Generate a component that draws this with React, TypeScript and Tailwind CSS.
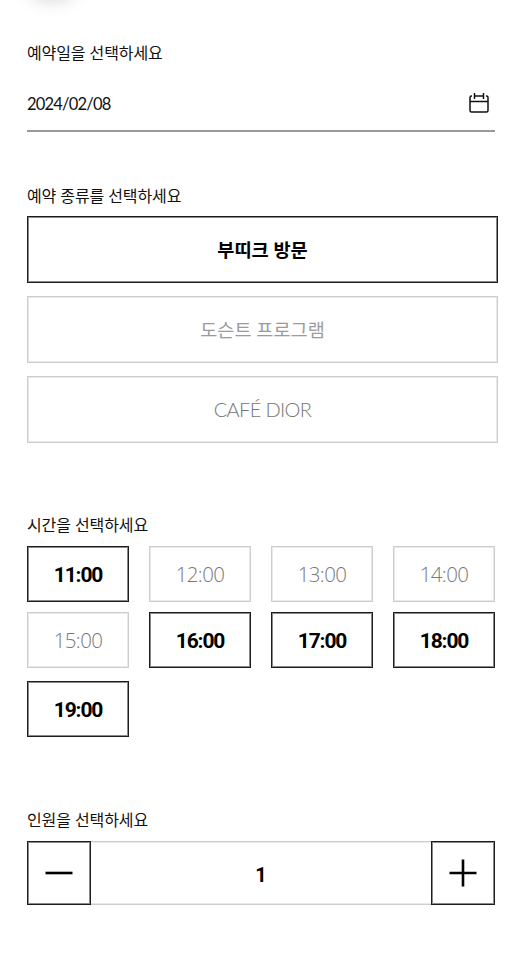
import clsx from "clsx";

interface Option {
  label: string;
  active: boolean;
}

const types: Option[] = [
  { label: "부띠크 방문", active: true },
  { label: "도슨트 프로그램", active: false },
];

const times: Option[] = [
  { label: "11:00", active: true },
  { label: "12:00", active: false },
  { label: "13:00", active: false },
  { label: "14:00", active: false },
  { label: "15:00", active: false },
  { label: "16:00", active: true },
  { label: "17:00", active: true },
  { label: "18:00", active: true },
  { label: "19:00", active: true },
];

const Label = ({ children }: { children: string }) => (
  <h2 className="h-6 text-[16px] leading-6 tracking-[-0.1px] text-[#111]">{children}</h2>
);

const frame = (active: boolean) =>
  active
    ? "border border-[#1c1c1c] shadow-[inset_0_0_0_1px_#8a8a8a]"
    : "border border-[#cdcdcd] shadow-[inset_0_0_0_1px_#e9e9e9]";

export default function App() {
  return (
    <div className="relative h-[960px] w-[522px] overflow-hidden bg-white pl-[27px] pt-[41px] font-['Open_Sans','Noto_Sans_CJK_KR',sans-serif]">
      {/* Shadow of the floating button above */}
      <div className="absolute left-[27px] -top-[54px] size-[50px] rounded-full shadow-[0_3px_20px_rgba(0,0,0,0.22)]" />

      {/* Date */}
      <section className="w-[468px]">
        <Label>예약일을 선택하세요</Label>
        <div className="mt-5 flex h-[47px] items-start justify-between border-b-2 border-[#999] pr-1.5">
          <span className="mt-[7px] font-['Lato'] text-[16.5px] leading-6 tracking-[-0.8px] text-[#111]">2024/02/08</span>
          <svg viewBox="0 0 20 20" className="mt-[8px] size-5" fill="none" stroke="#111" strokeWidth="1.5">
            <path d="M3 3H2.5Q1 3 1 4.5V17.5Q1 19 2.5 19H17.5Q19 19 19 17.5V4.500Q19 3 17.500 3H17M5.500 0V6M14.500 0V6M5.500 3H14.500M1 8.500H19" />
          </svg>
        </div>
      </section>

      {/* Reservation type */}
      <section className="mt-[52px] w-[471px]">
        <Label>예약 종류를 선택하세요</Label>
        <div className="mt-2 flex flex-col gap-[13px] text-[18.6px]">
          {types.map((t) => (
            <button
              key={t.label}
              className={clsx("h-[67px]", frame(t.active), t.active ? "font-bold text-black" : "text-[#9b9b9b]")}
            >
              {t.label}
            </button>
          ))}
          <button
            className={clsx("h-[67px] pb-0.5 font-['Lato'] text-[20px] font-light tracking-[-0.65px] text-[#757575]", frame(false))}
          >
            CAFÉ DIOR
          </button>
        </div>
      </section>

      {/* Time */}
      <section className="mt-[70px] w-[468px]">
        <Label>시간을 선택하세요</Label>
        <div className="mt-[9px] grid grid-cols-4 gap-x-5 text-[20.5px]">
          {times.map((t, i) => (
            <button
              key={t.label}
              className={clsx(
                "h-14",
                i < 4 ? "mb-2.5" : i < 8 && "mb-[13px]",
                frame(t.active),
                t.active
                  ? "pt-[3px] font-['Roboto'] text-[21px] font-bold tracking-[-1.1px] text-black"
                  : "pt-px font-light tracking-[-0.6px] text-[#787878]"
              )}
            >
              {t.label}
            </button>
          ))}
        </div>
      </section>

      {/* Guests */}
      <section className="mt-[71px] w-[468px]">
        <Label>인원을 선택하세요</Label>
        <div className="mt-[9px] flex h-16">
          <button className={clsx("flex w-16 items-center justify-center", frame(true))}>
            <svg viewBox="0 0 28 28" className="size-7" stroke="#000" strokeWidth="2.6">
              <path d="M0.500 14H27.500" />
            </svg>
          </button>
          <div className="flex flex-1 items-center justify-center border-y border-[#cdcdcd] pt-1 font-['Roboto'] text-[20px] font-bold text-black shadow-[inset_0_-1px_0_#e9e9e9,inset_0_1px_0_#e9e9e9]">
            1
          </div>
          <button className={clsx("flex w-16 items-center justify-center", frame(true))}>
            <svg viewBox="0 0 28 28" className="size-7" stroke="#000" strokeWidth="2.6">
              <path d="M0.500 14H27.500M14 0.500V27.500" />
            </svg>
          </button>
        </div>
      </section>
    </div>
  );
}
